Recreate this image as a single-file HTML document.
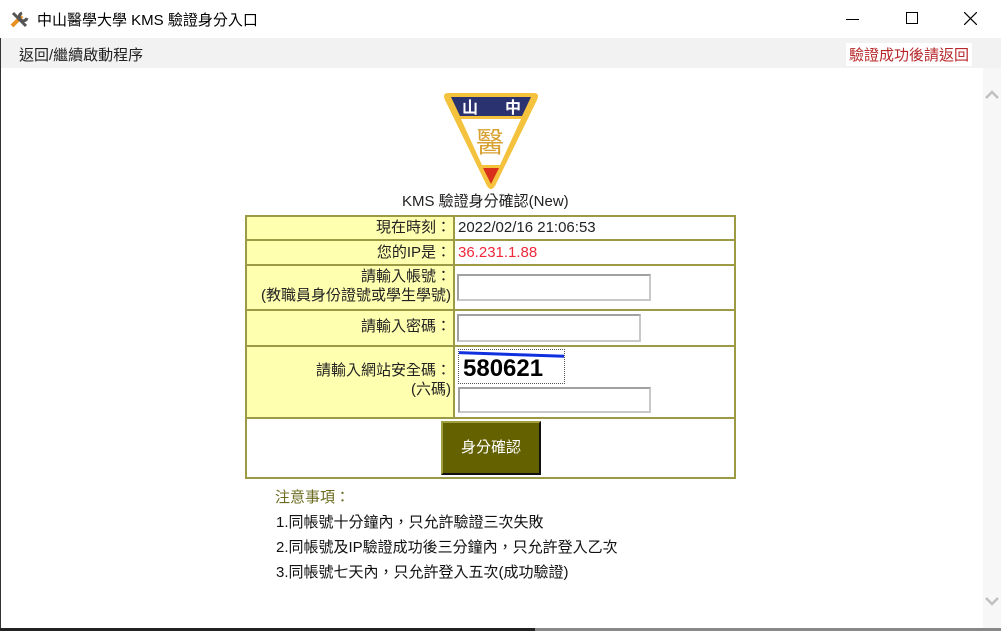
<!DOCTYPE html>
<html><head><meta charset="utf-8"><style>
*{margin:0;padding:0;box-sizing:border-box}
body{width:1001px;height:631px;overflow:hidden;background:#fff;position:relative;font-family:"Liberation Sans","Noto Sans CJK TC",sans-serif;font-size:14px;color:#000}
.a{position:absolute;white-space:nowrap}
.y{position:absolute;background:#ffffb0}
.h{position:absolute;height:2px;background:#9d9a45;left:245px;width:491px}
.v{position:absolute;width:2px;background:#9d9a45;top:215px;height:264px}
.in{position:absolute;border:2px solid #a0a0a0;border-right-color:#c8c8c8;border-bottom-color:#c8c8c8;background:#fff}
.lab{position:absolute;right:550px;text-align:right;font-size:15px;color:#222;line-height:19px}
</style></head><body>
<svg class="a" style="left:9px;top:9px" width="22" height="20" viewBox="0 0 22 20"><path d="M3 17 L13 7" stroke="#e89020" stroke-width="4"/><path d="M13 4 a4 4 0 1 0 5 5" stroke="#555" stroke-width="3" fill="none"/><path d="M4 4 L17 17" stroke="#555" stroke-width="3"/></svg>
<div class="a" style="left:37px;top:9px;font-size:15px">中山醫學大學 KMS 驗證身分入口</div>
<div class="a" style="left:846px;top:19px;width:13px;height:1px;background:#000"></div>
<div class="a" style="left:906px;top:12px;width:12px;height:12px;border:1px solid #000"></div>
<svg class="a" style="left:964px;top:12px" width="13" height="13"><path d="M0 0L13 13M13 0L0 13" stroke="#000" stroke-width="1.2"/></svg>
<div class="a" style="left:0;top:38px;width:1001px;height:30px;background:#f2f2f2"></div>
<div class="a" style="left:19px;top:44px;font-size:15px;color:#222">返回/繼續啟動程序</div>
<div class="a" style="left:846px;top:43px;background:#fff;padding:1px 3px;font-size:15px;color:#b8282a">驗證成功後請返回</div>
<div class="a" style="left:983px;top:68px;width:18px;height:560px;background:#f7f7f7"></div>
<svg class="a" style="left:984px;top:89px" width="16" height="12"><path d="M2 9L8 3L14 9" stroke="#c0c0c0" stroke-width="2.5" fill="none"/></svg>
<svg class="a" style="left:984px;top:595px" width="16" height="12"><path d="M2 3L8 9L14 3" stroke="#c0c0c0" stroke-width="2.5" fill="none"/></svg>
<div class="a" style="left:0;top:38px;width:1px;height:593px;background:#333"></div>
<div class="a" style="left:0;top:628px;width:1001px;height:3px;background:#222"></div>
<div class="a" style="left:535px;top:628px;width:466px;height:3px;background:#888"></div>
<svg class="a" style="left:442px;top:91px" width="98" height="100" viewBox="0 0 98 100">
<path d="M6 2 H92 Q98 2 95 9 L53 95 Q49 101 45 95 L3 9 Q0 2 6 2Z" fill="#f4c23c"/>
<path d="M9 6 H89 L80 25 H18 Z" fill="#2b3270"/>
<path d="M19 28 H79 L58 74 H40 Z" fill="#fff"/>
<path d="M41 77 H57 L49 93 Z" fill="#d8301a"/>
<text x="20" y="22" font-size="16" fill="#fff" font-weight="bold" font-family="Noto Sans CJK TC">山</text>
<text x="63" y="22" font-size="16" fill="#fff" font-weight="bold" font-family="Noto Sans CJK TC">中</text>
<text x="34" y="61" font-size="28" fill="#d8a030" font-family="Noto Sans CJK TC">醫</text>
</svg>
<div class="a" style="left:402px;top:190px;font-size:15px;color:#222">KMS 驗證身分確認(New)</div>
<div class="y" style="left:245px;top:215px;width:209px;height:203px"></div>
<div class="h" style="top:215px"></div><div class="h" style="top:239px"></div><div class="h" style="top:264px"></div><div class="h" style="top:309px"></div><div class="h" style="top:345px"></div><div class="h" style="top:417px"></div><div class="h" style="top:477px"></div>
<div class="v" style="left:245px"></div><div class="v" style="left:734px"></div>
<div class="a" style="left:453px;top:215px;width:2px;height:203px;background:#9d9a45"></div>
<div class="lab" style="top:218px">現在時刻：</div>
<div class="a" style="left:458px;top:219px;font-size:15px;color:#222">2022/02/16 21:06:53</div>
<div class="lab" style="top:243px">您的IP是：</div>
<div class="a" style="left:458px;top:244px;font-size:15px;color:#f0283c">36.231.1.88</div>
<div class="lab" style="top:267px">請輸入帳號：<br>(教職員身份證號或學生學號)</div>
<div class="in" style="left:457px;top:274px;width:194px;height:27px"></div>
<div class="lab" style="top:317px">請輸入密碼：</div>
<div class="in" style="left:457px;top:314px;width:184px;height:28px"></div>
<div class="lab" style="top:361px">請輸入網站安全碼：<br>(六碼)</div>
<div class="a" style="left:458px;top:349px;width:107px;height:35px;border:1px dotted #555;background:#fff;overflow:hidden">
<div style="position:absolute;left:0;top:3px;width:107px;height:3px;background:#1030e0;transform:rotate(2deg)"></div>
<div style="position:absolute;left:4px;top:5px;font-size:24px;font-weight:bold;letter-spacing:0px">580621</div></div>
<div class="in" style="left:458px;top:387px;width:193px;height:26px"></div>
<div class="a" style="left:441px;top:421px;width:100px;height:54px;background:#646200;border:2px solid;border-color:#a0a040 #111 #111 #a0a040;color:#fff;font-size:15px;text-align:center;line-height:50px">身分確認</div>
<div class="a" style="left:275px;top:486px;font-size:15px;color:#6b6b20">注意事項：</div>
<div class="a" style="left:276px;top:510px;font-size:15px;color:#111;line-height:25px">1.同帳號十分鐘內，只允許驗證三次失敗<br>2.同帳號及IP驗證成功後三分鐘內，只允許登入乙次<br>3.同帳號七天內，只允許登入五次(成功驗證)</div>
</body></html>
